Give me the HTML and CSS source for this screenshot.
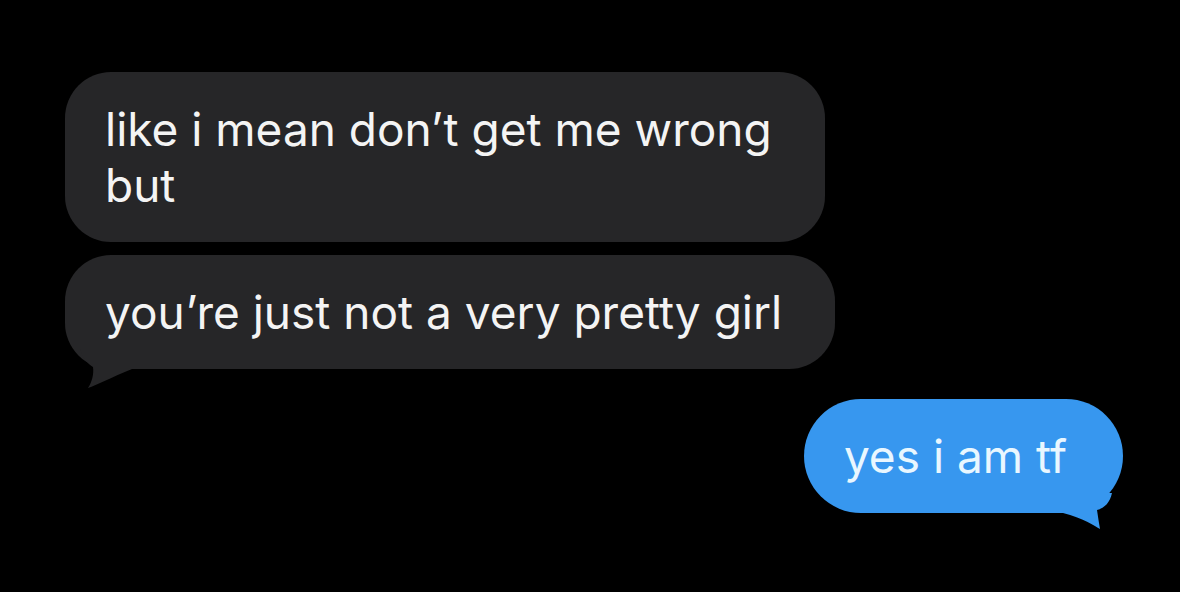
FILE: index.html
```html
<!DOCTYPE html>
<html lang="en">
<head>
    <meta charset="UTF-8">
    <meta name="viewport" content="width=device-width, initial-scale=1.0">
    <title>Messages</title>
    <link rel="stylesheet" href="styles.css">
</head>
<body>
    <div class="thread">
        <div class="bubble them">like i mean don’t get me wrong<br>but</div>

        <div class="bubble them">
            you’re just not a very pretty girl
            <svg class="tail-left" width="60" height="40" viewBox="0 0 60 40">
                <path d="M0 0 C3 10 8 15 13 18 C14 25 12 33 8 39 C17 36 30 29 52 20 L60 20 L60 0 Z" fill="#262628"/>
            </svg>
        </div>

        <div class="bubble me">
            yes i am tf
            <svg class="tail-right" width="60" height="40" viewBox="0 0 60 40">
                <path d="M0 0 L49 0 C47 9 42 15 34 17 C35 24 36 30 37 36 C32 33 20 25 0 20 Z" fill="#3797ef"/>
            </svg>
        </div>
    </div>
</body>
</html>
```

FILE: styles.css
```css
body {
    margin: 0;
    background-color: #000;
    font-family: Inter, "Noto Sans", Arial, sans-serif;
}
.thread {
    display: flex;
    flex-direction: column;
    align-items: flex-start;
    min-height: 592px;
    box-sizing: border-box;
    padding: 72px 57px 60px 65px;
}
.bubble {
    position: relative;
    box-sizing: border-box;
    padding: 29px 53px 29px 40px;
    border-radius: 46px;
    font-size: 46px;
    line-height: 56px;
    color: #f4f4f4;
    white-space: nowrap;
}
.them {
    background-color: #262628;
    margin-bottom: 13px;
}
.me {
    align-self: flex-end;
    margin-top: 17px;
    padding: 29px 56px 29px 40px;
    border-radius: 57px;
    background-color: #3797ef;
    color: #e9f7ff;
}
.tail-left {
    position: absolute;
    left: 15px;
    bottom: -20px;
}
.tail-right {
    position: absolute;
    right: 0;
    bottom: -20px;
}
```
